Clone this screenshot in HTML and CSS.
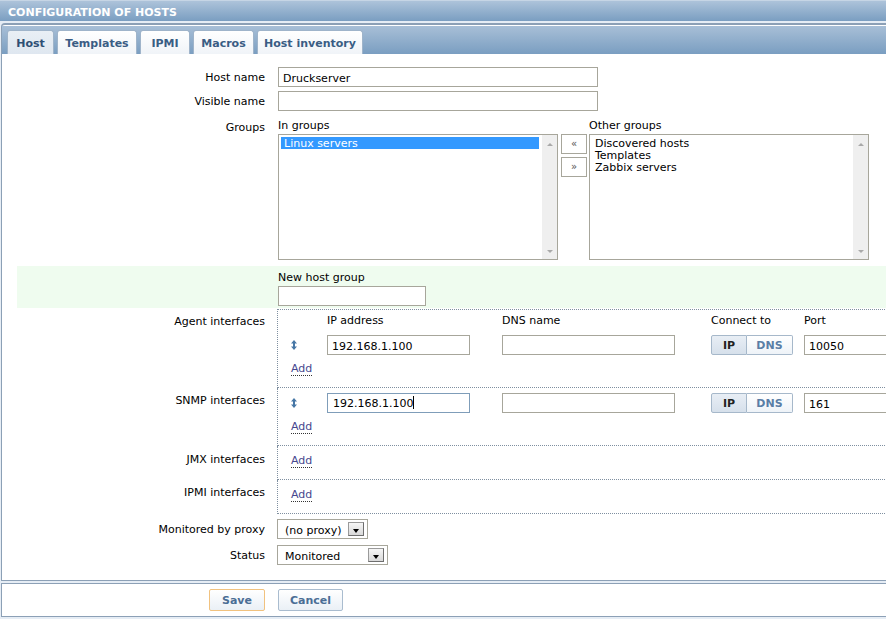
FILE: index.html
```html
<!DOCTYPE html>
<html>
<head>
<meta charset="utf-8">
<title>Configuration of hosts</title>
<link rel="stylesheet" href="styles.css">
</head>
<body>
<div class="page">
  <div class="hdr">CONFIGURATION OF HOSTS</div>
  <div class="frame">
    <div class="tabbar">
      <div class="tab active t1">Host</div>
      <div class="tab t2">Templates</div>
      <div class="tab t3">IPMI</div>
      <div class="tab t4">Macros</div>
      <div class="tab t5">Host inventory</div>
    </div>
    <div class="form">
      <div class="row">
        <div class="lbl">Host name</div>
        <div class="fld"><input class="txt w320" value="Druckserver"></div>
      </div>
      <div class="row">
        <div class="lbl">Visible name</div>
        <div class="fld"><input class="txt w320" value=""></div>
      </div>
      <div class="row groups">
        <div class="lbl top5">Groups</div>
        <div class="fld">
          <div class="ggrid">
            <div class="cap">In groups</div>
            <div></div>
            <div class="cap">Other groups</div>
            <div class="lb">
              <div class="lb-items"><div class="opt sel">Linux servers</div></div>
              <div class="sb"><i class="up"></i><i class="dn"></i></div>
            </div>
            <div class="mvcol">
              <div class="mv">&laquo;</div>
              <div class="mv">&raquo;</div>
            </div>
            <div class="lb">
              <div class="lb-items">
                <div class="opt">Discovered hosts</div>
                <div class="opt">Templates</div>
                <div class="opt">Zabbix servers</div>
              </div>
              <div class="sb"><i class="up"></i><i class="dn"></i></div>
            </div>
          </div>
        </div>
      </div>
      <div class="row newgrp">
        <div class="lbl"></div>
        <div class="fld">
          <div class="cap2">New host group</div>
          <input class="txt w148" value="">
        </div>
      </div>

      <div class="irow">
        <div class="lbl ilbl top5">Agent interfaces</div>
        <div class="icell first agent">
          <div class="igrid ihead">
            <div></div>
            <div>IP address</div>
            <div>DNS name</div>
            <div>Connect to</div>
            <div>Port</div>
          </div>
          <div class="igrid irowfields">
            <div class="arr"><svg width="6" height="10" viewBox="0 0 6 10"><path d="M3 0 L6 3.6 H4 V6.4 H6 L3 10 L0 6.4 H2 V3.6 H0 Z" fill="#4777a6"/></svg></div>
            <div><input class="txt w143" value="192.168.1.100"></div>
            <div><input class="txt w173" value=""></div>
            <div class="tog"><span class="on">IP</span><span>DNS</span></div>
            <div><input class="txt w100" value="10050"></div>
          </div>
          <div class="addrow"><span class="add">Add</span></div>
        </div>
      </div>

      <div class="irow">
        <div class="lbl ilbl top5">SNMP interfaces</div>
        <div class="icell snmp">
          <div class="igrid irowfields">
            <div class="arr"><svg width="6" height="10" viewBox="0 0 6 10"><path d="M3 0 L6 3.6 H4 V6.4 H6 L3 10 L0 6.4 H2 V3.6 H0 Z" fill="#4777a6"/></svg></div>
            <div><div class="txt w143 focus fake">192.168.1.100<span class="caret"></span></div></div>
            <div><input class="txt w173" value=""></div>
            <div class="tog"><span class="on">IP</span><span>DNS</span></div>
            <div><input class="txt w100" value="161"></div>
          </div>
          <div class="addrow"><span class="add">Add</span></div>
        </div>
      </div>

      <div class="irow">
        <div class="lbl ilbl top6">JMX interfaces</div>
        <div class="icell simple"><span class="add">Add</span></div>
      </div>

      <div class="irow">
        <div class="lbl ilbl top5">IPMI interfaces</div>
        <div class="icell simple"><span class="add">Add</span></div>
      </div>

      <div class="row proxy">
        <div class="lbl">Monitored by proxy</div>
        <div class="fld"><div class="selbox w91"><span>(no proxy)</span><i class="dd"></i></div></div>
      </div>
      <div class="row status">
        <div class="lbl">Status</div>
        <div class="fld"><div class="selbox w111"><span>Monitored</span><i class="dd"></i></div></div>
      </div>
    </div>
  </div>
  <div class="footer">
    <div class="flbl"><div class="btn save">Save</div></div>
    <div class="btn cancel">Cancel</div>
  </div>
</div>
</body>
</html>
```
FILE: styles.css
```css
* { box-sizing: border-box; }
html, body { margin: 0; padding: 0; overflow: hidden; }
body {
  width: 886px;
  height: 619px;
  background: #e6edf5;
  font-family: "DejaVu Sans", Verdana, sans-serif;
  font-size: 11px;
  color: #000;
}
.page { width: 1000px; }

.hdr {
  height: 21px;
  border-top: 1px solid #c6d5e5;
  padding: 3px 0 0 8px;
  line-height: 17px;
  color: #fff;
  font-weight: bold;
  background: linear-gradient(#adc3da, #7a9ec1);
  margin-bottom: 2px;
}

.frame {
  margin-left: 1px;
  border-left: 1px solid #8ca0b6;
  border-top: 2px solid #8ca0b6;
  border-bottom: 1px solid #8ca0b6;
  border-top-left-radius: 4px;
  background: #fff;
  padding-top: 1px;
}

.tabbar {
  height: 28px;
  display: flex;
  align-items: flex-end;
  padding-left: 5px;
  background: linear-gradient(#a8bfd7, #7a9ec1);
}
.tab {
  height: 24px;
  border: 1px solid #9fb4ca;
  border-bottom: none;
  border-radius: 3px 3px 0 0;
  padding: 2px 0 0;
  line-height: 21px;
  text-align: center;
  white-space: nowrap;
  margin-right: 3px;
  font-weight: bold;
  color: #3a5d84;
  background: linear-gradient(#ffffff, #f0f4f8);
}
.t1 { width: 47px; }
.t2 { width: 80px; }
.t3 { width: 50px; }
.t4 { width: 61px; }
.t5 { width: 106px; }
.tab.active {
  background: linear-gradient(#e9eff5, #dfe7f0);
  color: #2f4f74;
}

.form {
  padding: 13px 0 15px;
}
.row { display: flex; }
.lbl {
  width: 263px;
  height: 20px;
  flex: none;
  text-align: right;
  line-height: 22px;
  white-space: nowrap;
}
.top5 { height: auto; padding-top: 6px; line-height: 14px; }
.top6 { height: auto; padding-top: 7px; line-height: 14px; }
.fld { margin-left: 12px; }

.row + .row { margin-top: 4px; }

.txt {
  display: block;
  height: 20px;
  border: 1px solid #a7a69b;
  padding: 2px 4px 0;
  font-family: "DejaVu Sans", Verdana, sans-serif;
  font-size: 11px;
  color: #000;
  background: #fff;
  outline: none;
  margin: 0;
}
.fld > .txt { margin-left: 1px; }
.w320 { width: 320px; }
.w148 { width: 148px; }
.w143 { width: 143px; }
.w173 { width: 173px; }
.w100 { width: 100px; }
.focus { border-color: #7f9db9; }
.fake { line-height: 17px; padding: 1px 0 0 5px; }
.caret {
  display: inline-block;
  width: 1px;
  height: 13px;
  background: #000;
  vertical-align: -2px;
}

/* groups */
.row.groups { margin-top: 4px; }
.ggrid {
  display: grid;
  grid-template-columns: 280px 31px 280px;
  margin-left: 1px;
}
.cap {
  padding-top: 4px;
  line-height: 14px;
  margin-bottom: 1px;
}
.lb {
  width: 280px;
  height: 126px;
  border: 1px solid #a7a69b;
  display: flex;
  background: #fff;
}
.lb-items {
  flex: 1;
  padding: 2px 3px 0 2px;
}
.opt {
  height: 12px;
  line-height: 14px;
  padding-left: 3px;
  white-space: nowrap;
}
.opt.sel { background: #3399ff; color: #fff; }
.sb {
  width: 15px;
  flex: none;
  background: #efefef;
  display: flex;
  flex-direction: column;
  justify-content: space-between;
  align-items: center;
  padding: 8px 0 6px;
}
.sb i { display: block; width: 0; height: 0; border-left: 3px solid transparent; border-right: 3px solid transparent; }
.sb .up { border-bottom: 3px solid #a9a9a9; }
.sb .dn { border-top: 3px solid #a9a9a9; }
.mvcol { padding-left: 3px; }
.mv {
  width: 26px;
  height: 20px;
  border: 1px solid #a7a69b;
  background: #fff;
  text-align: center;
  line-height: 17px;
  color: #555;
  font-size: 10px;
}
.mv + .mv { margin-top: 3px; }

/* new host group */
.row.newgrp {
  margin-top: 6px;
  margin-left: 15px;
  background: #effcef;
  padding-bottom: 2px;
}
.newgrp .lbl { width: 248px; }
.cap2 {
  padding: 5px 0 0 1px;
  line-height: 14px;
  margin-bottom: 1px;
}
.newgrp .txt { margin-left: 1px; }

/* interfaces */
.irow { display: flex; }
.row.newgrp + .irow { margin-top: 1px; }
.icell {
  margin-left: 12px;
  width: 700px;
  border-left: 1px dotted #7f8fa0;
  border-bottom: 1px dotted #7f8fa0;
}
.icell.first { border-top: 1px dotted #7f8fa0; }
.icell.agent { padding: 4px 0 11px; }
.icell.snmp { padding: 5px 0 11px; }
.icell.simple { padding: 8px 0 11px 13px; line-height: 14px; }
.igrid {
  display: grid;
  grid-template-columns: 49px 175px 209px 93px 120px;
}
.ihead { line-height: 14px; margin-bottom: 7px; }
.irowfields { height: 20px; align-items: center; }
.arr { padding-left: 13px; height: 20px; display: flex; align-items: center; }
.arr svg { display: block; }
.addrow { margin-top: 7px; padding-left: 13px; line-height: 14px; }
.add {
  display: inline-block;
  color: #47478e;
  line-height: 12px;
  border-bottom: 1px dotted #333;
}

.tog { display: flex; height: 20px; }
.tog span {
  display: block;
  height: 20px;
  border: 1px solid #a6b8ca;
  line-height: 20px;
  text-align: center;
  font-weight: bold;
  color: #5a7ea6;
  background: linear-gradient(#ffffff, #eef3f8);
}
.tog span.on {
  width: 36px;
  color: #222;
  background: linear-gradient(#e8eef5, #d6e0eb);
  border-radius: 2px 0 0 2px;
}
.tog span + span {
  width: 46px;
  border-left: none;
  border-radius: 0 2px 2px 0;
}

/* selects */
.row.proxy { margin-top: 5px; }
.row.status { margin-top: 6px; }
.selbox {
  height: 20px;
  border: 1px solid #a7a69b;
  display: flex;
  align-items: center;
  justify-content: space-between;
  padding: 0 3px 0 7px;
  background: #fff;
}
.selbox span { padding-top: 2px; }
.w91 { width: 91px; }
.w111 { width: 111px; }
.dd {
  display: block;
  position: relative;
  width: 16px;
  height: 14px;
  border: 1px solid #6e6e6e;
  border-top-color: #9a9a9a;
  border-left-color: #9a9a9a;
  background: linear-gradient(#f6f6f6, #d9d9d9);
}
.dd::after {
  content: "";
  position: absolute;
  left: 4px;
  bottom: 2px;
  border-left: 3px solid transparent;
  border-right: 3px solid transparent;
  border-top: 4px solid #000;
}

/* footer */
.footer {
  margin-top: 2px;
  margin-left: 1px;
  border-left: 1px solid #8ca0b6;
  border-top: 1px solid #8ca0b6;
  border-bottom: 1px solid #8ca0b6;
  background: #fff;
  height: 34px;
  padding-top: 5px;
  display: flex;
}
.flbl {
  width: 263px;
  display: flex;
  justify-content: flex-end;
}
.btn {
  height: 22px;
  line-height: 21px;
  text-align: center;
  font-weight: bold;
  color: #4b6e95;
  background: linear-gradient(#ffffff, #eaf0f6);
  border-radius: 2px;
}
.btn.save { width: 56px; border: 1px solid #f1c27f; }
.btn.cancel { width: 65px; margin-left: 13px; border: 1px solid #a9bccf; }
```
